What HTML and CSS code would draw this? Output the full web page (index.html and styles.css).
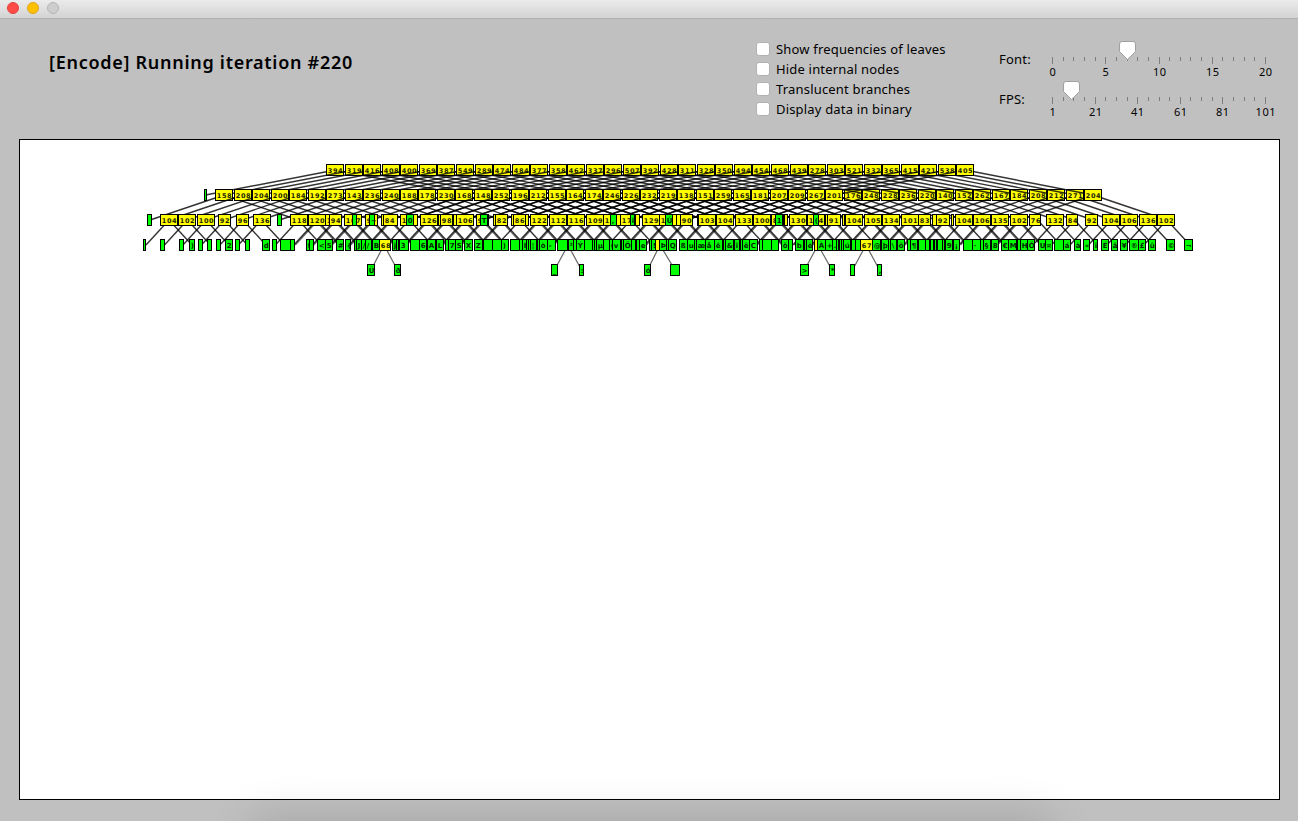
FILE: index.html
```html
<!DOCTYPE html>
<html lang="en">
<head>
<meta charset="utf-8">
<title>Huffman tree</title>
<link rel="stylesheet" href="styles.css">
</head>
<body>
<div class="window">
  <div class="titlebar"><span class="light close"></span><span class="light minimize"></span><span class="light zoom"></span></div>
  <header class="controls">
    <h1 class="status">[Encode] Running iteration #220</h1>
    <div class="options">
      <label class="option"><span class="box"></span><span>Show frequencies of leaves</span></label>
      <label class="option"><span class="box"></span><span>Hide internal nodes</span></label>
      <label class="option"><span class="box"></span><span>Translucent branches</span></label>
      <label class="option"><span class="box"></span><span>Display data in binary</span></label>
    </div>
    <div class="sliders">
      <div class="slider"><span class="name">Font:</span><svg class="track" width="240" height="40" id="font"></svg></div>
      <div class="slider"><span class="name">FPS:</span><svg class="track" width="240" height="40" id="fps"></svg></div>
    </div>
  </header>
  <main class="canvas"><svg id="tree" width="1259" height="659" viewBox="20 140 1259 659"></svg></main>
  <div class="shade"></div>
</div>
<script src="tree.js"></script>
</body>
</html>
```
FILE: styles.css
```css
body { margin: 0; background: #c0c0c0; font-family: "Noto Sans", "Open Sans", sans-serif; color: #000; }
.window { position: relative; display: flex; flex-direction: column; width: 1298px; height: 821px; overflow: hidden; background: #c0c0c0; }
.titlebar { display: flex; gap: 8px; flex: none; box-sizing: border-box; height: 19px; padding: 2px 7px; background: linear-gradient(#ebebeb, #d3d3d3); border-bottom: 1px solid #b1b1b1; }
.light { box-sizing: border-box; width: 12px; height: 12px; border-radius: 50%; border: 1px solid; }
.close { background: #ff4b47; border-color: #e2423d; }
.minimize { background: #ffc000; border-color: #e0a21a; }
.zoom { background: #cdcdcd; border-color: #b5b5b5; }
.controls { display: flex; flex: none; height: 120px; }
.status { box-sizing: border-box; width: 756px; margin: 0; padding: 30px 0 0 49px; font-size: 18px; line-height: 27px; font-weight: 600; letter-spacing: .72px; white-space: nowrap; }
.options { width: 243px; padding-top: 20px; }
.option { display: flex; align-items: center; gap: 6px; height: 20px; font-size: 13px; letter-spacing: .18px; white-space: nowrap; }
.box { box-sizing: border-box; width: 14px; height: 14px; background: #fff; border: 1px solid #b2b2b2; border-radius: 3px; }
.sliders { padding-top: 20px; }
.slider { display: flex; height: 40px; }
.name { width: 45px; padding-top: 10px; font-size: 13px; line-height: 20px; letter-spacing: .2px; }
.track { flex: none; }
.tick { stroke: #7d7d7d; stroke-width: 1; }
.scale { font-size: 11px; text-anchor: middle; letter-spacing: .5px; }
.thumb { fill: #fff; stroke: #a0a0a0; stroke-width: 1; }
.canvas { flex: none; width: 1259px; height: 659px; margin-left: 19px; background: #fff; border: 1px solid #000; }
.canvas svg { display: block; }
.edge { stroke: #000; stroke-opacity: .8; stroke-width: 1.4; }
.edge.faint { stroke-opacity: .6; stroke-width: 1.2; }
.node { stroke: #000; stroke-width: 1; shape-rendering: crispEdges; }
.inner { fill: #ff0; }
.leaf { fill: #0f0; }
.label { font: bold 6.5px "DejaVu Sans", sans-serif; letter-spacing: .6px; fill: #1c1c00; }
.leaf-label { font-size: 7px; fill: #002800; }
.shade { position: absolute; left: 254px; top: 821px; width: 796px; height: 100px; box-shadow: 0 0 46px rgba(0, 0, 0, .17); }
```
FILE: tree.js
```js
const NS = 'http://www.w3.org/2000/svg';
function add(parent, tag, attrs, text) {
  const el = document.createElementNS(NS, tag);
  for (const k in attrs) el.setAttribute(k, attrs[k]);
  if (text !== undefined) el.textContent = text;
  parent.appendChild(el);
  return el;
}

/* sliders */
function slider(id, labels, value) {
  const svg = document.getElementById(id);
  const step = 20 / (labels.length - 1);
  for (let i = 0; i <= 20; i++) {
    const x = 8.5 + Math.round(i * 10.65);
    const major = i % step === 0;
    add(svg, 'line', { class: 'tick', x1: x, x2: x, y1: 18, y2: major ? 25 : 22 });
    if (major) add(svg, 'text', { class: 'scale', x: x + .3, y: 37 }, labels[i / step]);
  }
  const x = 8.5 + value;
  add(svg, 'path', { class: 'thumb', d: `M${x - 8} 5q0-2.500 2.500-2.500h11q2.500 0 2.500 2.500v7.500L${x} 20.500L${x - 8} 12.500z` });
}
slider('font', [0, 5, 10, 15, 20], 75);
slider('fps', [1, 21, 41, 61, 81, 101], 19);

/* tree */
const svg = document.getElementById('tree');
const PITCH = 18.53;
function edge(x1, y1, x2, y2, faint) { add(svg, 'line', { class: faint ? 'edge faint' : 'edge', x1, y1, x2, y2 }); }
function node(x, y, w, label, kind) {
  x = Math.round(x);
  add(svg, 'rect', { class: 'node ' + kind, x: x + .5, y: y - 5.5, width: w - 1, height: 11 });
  if (label) add(svg, 'text', { class: 'label' + (kind === 'leaf' ? ' leaf-label' : ''), x: x + 1.8, y: y + 2.8 }, label);
}
const roots = '394 319 416 408 400 369 387 549 289 474 484 377 358 462 337 296 507 392 428 311 328 350 494 454 468 439 278 303 521 332 365 415 421 538 405'.split(' ');
const second = ['', ...'158 208 204 200 184 192 273 143 236 240 188 178 230 168 148 252 196 212 155 164 174 246 226 232 219 138 151 259 165 181 207 209 267 201 176 248 228 236 220 140 152 262 167 184 208 212 271 204'.split(' ')];
const rootX = i => 335.3 + PITCH * i;
const secondX = k => 205.6 + 18.49 * k;

function child(k) {
  const x = secondX(k);
  if (k === 0) { node(204, 195, 3, '', 'leaf'); return; }
  edge(x, 195, x - 74, 220);
  edge(x, 195, x + 74, 220);
  node(x - 9, 195, 18, second[k], 'inner');
}
roots.forEach((label, i) => {
  const x = rootX(i);
  edge(x, 170, secondX(i), 195);
  edge(x, 170, secondX(i + 14), 195);
  node(x - 9, 170, 18, label, 'inner');
  child(i);
  child(i + 14);
});

/* x, width, label, kind (g = leaf) */
const third = [
  [147,5,'','g'],[160,18,'104'],[178,18,'102'],[197,18,'100'],[218,13,'92'],[236,13,'96'],[253,18,'136'],[277,5,'','g'],[290,18,'118'],[308,18,'120'],
  [325,16,'1'],[329,13,'94'],[344,18,'107'],[352,5,'','g'],[365,13,'9'],[369,6,'~','g'],[381,6,''],[383,15,'84'],[400,18,'1'],[406,8,'0','g'],
  [420,18,'126'],[438,4,''],[440,13,'98'],[453,4,''],[456,18,'106'],[476,13,'9'],[480,8,'T','g'],[493,4,''],[495,13,'82'],[511,3,''],[513,13,'86'],[525,4,''],
  [530,18,'122'],[549,18,'112'],[567,18,'116'],[586,18,'109'],[603,18,'1'],[610,7,',','g'],[620,18,'17'],[630,5,'i','g'],[635,5,''],
  [642,18,'129'],[659,18,'1'],[665,8,'Ú','g'],[676,5,''],[680,13,'90'],[697,3,''],[698,18,'103'],[716,18,'104'],[735,18,'133'],[753,18,'100'],
  [771,13,'8'],[775,8,'1','g'],[784,4,''],[789,18,'130'],[807,18,'1'],[817,8,'4'],[813,6,'(','g'],[825,4,''],[827,14,'91'],[842,3,''],
  [845,18,'104'],[864,18,'105'],[882,18,'134'],[901,18,'101'],[918,13,'83'],[932,5,''],[936,14,'92'],[951,3,''],[955,18,'104'],[973,18,'106'],
  [991,18,'135'],[1010,18,'102'],[1029,12,'76'],[1046,18,'132'],[1066,12,'84'],[1085,13,'92'],[1102,18,'104'],[1120,18,'106'],[1139,18,'136'],[1157,18,'102']
];
for (let j = 1; j <= 55; j++) {
  const x = 150.5 + 18.48 * j;
  if (j === 7) continue;
  edge(x, 220, x - 23, 245);
  edge(x, 220, x + 23, 245);
  if (j > 8 && j < 48 && j % 6 !== 2) {
    edge(x - 1.500, 220, x + 21.500, 245, true);
    edge(x + 1.500, 220, x - 21.500, 245, true);
  }
}
third.forEach(([x, w, t, k]) => node(x, 220, w, t, k ? 'leaf' : 'inner'));

const fifth = [[367,8,'Ü',384],[394,7,'ð',384],[551,7,'_',568],[579,5,':',568],[644,7,'ó',660],[670,10,'',660],[800,9,'>',818],[829,6,'*',818],[850,5,'',866],[877,5,',',866]];
fifth.forEach(([x, w, t, p]) => edge(p, 245, x + w / 2, 270, true));

const fourth = [
  [143,3],[160,5],[179,5],[189,6,')'],[198,5],[207,5],[216,5],[225,8,'2'],[235,5],[245,5],[262,8,'d'],[272,5],[280,11],[290,5],[306,4,'f'],[309,5],
  [317,9,'<'],[325,8,'5'],[336,8,'#'],[345,6,'{'],[354,4],[356,6,'J'],[361,5,'/'],[365,7,'/'],[372,8,'B'],[379,12,'68','y'],[392,5,'j'],[396,3],[399,10,'3'],
  [410,10],[419,8,'6'],[427,9,'A'],[436,8,'L'],[445,4],[448,8,'7'],[455,8,'S'],[464,9,'X'],[474,9,'Z'],[483,10],[492,10],[501,8,')'],
  [510,10],[519,4],[522,5,'I'],[526,3],[528,3],[530,7,'¦'],[537,3],[539,9,'ò'],[547,9,'-'],[557,11],[568,6,'²'],[573,4],[576,9,'Ý'],[584,9],[592,3],[594,3],[596,8,'µ'],
  [603,8],[609,4,'('],[612,9,'v'],[621,4],[623,9,'Ö'],[631,5],[636,4],[639,8,'e'],[649,3],[651,5,'!'],[655,5,'','y'],[659,8,'Þ'],[666,3],[668,9,'Q'],[679,9,'ß'],[687,8,'u'],
  [694,4],[696,10,'æ'],[705,10,'å'],[714,9,'ê'],[723,3],[725,9,'&'],[734,6,'î'],[740,3],[742,8,'ë'],[749,9,'C'],[759,4],[762,10],[771,8],
  [781,8,'ö'],[788,5],[795,9,'b'],[804,4],[806,7,'è'],[814,5,'','y'],[817,9,'À'],[825,8,'+'],[832,5,'.'],[836,3],[839,3],[841,3],[843,8,'ú'],[851,5],[855,6],
  [860,13,'67','y'],[872,9,'@'],[881,8,'þ'],[888,3],[890,7,'\\'],[897,8,'õ'],[907,4],[910,8,'¶'],[918,9],[925,5],[930,4],[934,3],[937,6],[942,3],[945,8,'9'],[953,7,'¡'],
  [963,10],[972,9,'·'],[980,4],[983,8,'§'],[991,8,'8'],[1001,8,'€'],[1008,9,'M'],[1017,4],[1020,8,'H'],[1027,8,'Ö'],[1038,8,'U'],[1045,8,'¤'],[1054,10],
  [1063,8,'á'],[1074,7,'à'],[1083,7,'«'],[1093,5,'ï'],[1101,8,'É'],[1111,7,'â'],[1120,8,'¥'],[1129,10,'®'],[1138,8,'£'],[1148,8,'û'],[1166,9,'©'],[1184,9,'¬']
];
fourth.forEach(([x, w, t, k]) => node(x, 245, w, t, k ? 'inner' : 'leaf'));
fifth.forEach(([x, w, t]) => node(x, 270, w, t, 'leaf'));
```
